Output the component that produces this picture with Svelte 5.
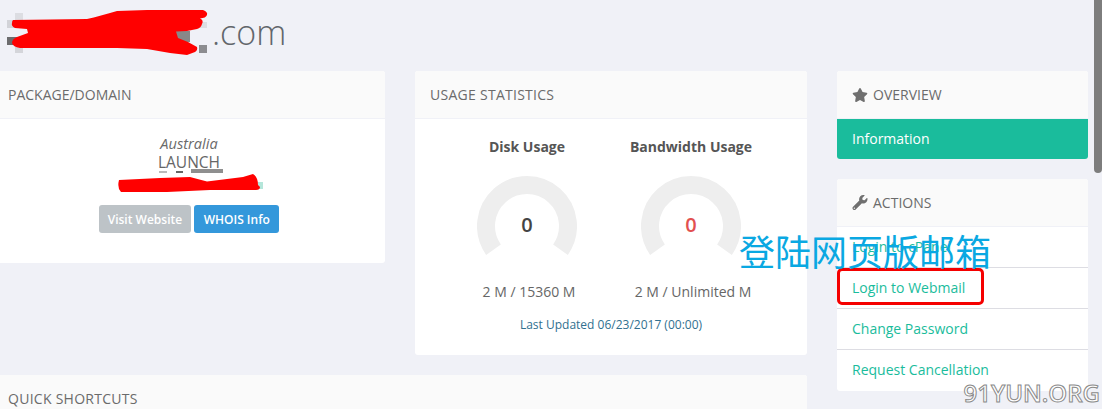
<script>
  const gauges = [
    { title: 'Disk Usage', value: '0', cls: '', label: '2 M / 15360 M' },
    { title: 'Bandwidth Usage', value: '0', cls: 'red', label: '2 M / Unlimited M' }
  ];
  const actions = ['Login to cPanel', 'Login to Webmail', 'Change Password', 'Request Cancellation'];
</script>

<div class="page">
  <h1 class="title"><span class="dot">.com</span></h1>
  <div class="columns">
    <div class="main">
      <div class="top">
        <section class="card pkg">
          <h2 class="head">PACKAGE/DOMAIN</h2>
          <div class="pkg-body">
            <em>Australia</em>
            <div class="plan">LAUNCH</div>
            <div class="domain"></div>
            <div class="buttons">
              <span class="btn grey">Visit Website</span>
              <span class="btn blue">WHOIS Info</span>
            </div>
          </div>
        </section>
        <section class="card usage">
          <h2 class="head wide">USAGE STATISTICS</h2>
          <div class="stats">
            {#each gauges as g}
              <div class="stat">
                <h3>{g.title}</h3>
                <div class="gauge">
                  <svg viewBox="0 0 100 90" width="100" height="90">
                    <path d="M16.5 73.7 A41 41 0 1 1 83.5 73.7" fill="none" stroke="#eeeeee" stroke-width="18" />
                  </svg>
                  <span class="val {g.cls}">{g.value}</span>
                </div>
                <p>{g.label}</p>
              </div>
            {/each}
          </div>
          <div class="updated">Last Updated 06/23/2017 (00:00)</div>
        </section>
      </div>
      <section class="card quick">
        <h2 class="head wide">QUICK SHORTCUTS</h2>
      </section>
    </div>
    <aside class="side">
      <section class="card">
        <h2 class="head">
          <svg class="ico" viewBox="0 0 576 512" width="16" height="14"><path fill="#6f6f6f" d="M259.3 17.8L194 150.2 47.9 171.5c-26.2 3.8-36.7 36.1-17.7 54.6l105.7 103-25 145.5c-4.5 26.3 23.2 46 46.4 33.7L288 439.6l130.7 68.7c23.2 12.2 50.9-7.4 46.4-33.7l-25-145.5 105.7-103c19-18.5 8.5-50.8-17.7-54.6L382 150.2 316.7 17.8c-11.7-23.6-45.6-23.9-57.4 0z"/></svg>
          OVERVIEW
        </h2>
        <div class="info">Information</div>
      </section>
      <section class="card">
        <h2 class="head">
          <svg class="ico" viewBox="0 0 512 512" width="16" height="15"><path fill="#6f6f6f" d="M507.73 109.1c-2.24-9.03-13.54-12.09-20.12-5.51l-74.36 74.36-67.88-11.31-11.31-67.88 74.36-74.36c6.62-6.62 3.43-17.9-5.66-20.16-47.38-11.74-99.55.91-136.58 37.93-39.64 39.64-50.55 97.1-34.05 147.2L18.74 402.76c-24.99 24.99-24.99 65.51 0 90.5 24.99 24.99 65.51 24.99 90.5 0l213.21-213.21c50.12 16.71 107.47 5.68 147.37-34.22 37.07-37.07 49.7-89.32 37.91-136.73zM64 472c-13.25 0-24-10.75-24-24 0-13.26 10.75-24 24-24s24 10.74 24 24c0 13.25-10.75 24-24 24z"/></svg>
          ACTIONS
        </h2>
        <ul class="links">
          {#each actions as a, i}
            <li>{a}{#if i === 1}<span class="ring"></span>{/if}</li>
          {/each}
        </ul>
      </section>
    </aside>
  </div>

  <div class="scrollbar"></div>

  <svg class="scribble" width="400" height="200" viewBox="0 0 400 200">
    <rect x="15" y="13" width="8" height="8" fill="#dcdde2" />
    <rect x="7" y="20" width="8" height="8" fill="#d2d3d8" />
    <rect x="7" y="37" width="13" height="8" fill="#6c6c6e" />
    <rect x="15" y="45" width="8" height="8" fill="#d4d5da" />
    <rect x="200" y="22" width="7" height="6" fill="#dcdde2" />
    <rect x="175" y="31" width="15" height="11" fill="#888" />
    <rect x="199" y="45" width="8" height="8" fill="#8c8c90" />
    <rect x="258" y="182" width="5" height="7" fill="#b5e6da" />
    <rect x="159" y="171" width="8" height="2" fill="#bbbbbb" />
    <rect x="176" y="171" width="7" height="2" fill="#666666" />
    <rect x="191" y="169" width="32" height="4" fill="#8f8f8f" />
    <path d="M13 20 L87 19 Q100 16 117 11 L147 10 L203 10 Q208 12 207 15 Q206 18 200 18.5 Q204 20 202 24 Q201 28 197 29 L187 31 L176 31.5 L178 38 L188 42 L197 47 Q198 50 195 52 L187 55 L170 53 L147 49 L117 48 L20 48 Q13 47 12 43 Q12 39 17 37 L28 33 L27 29 L15 28 Q11 26 12 23 Q12 21 13 20 Z" fill="#ff0000" />
    <path d="M119 180 L160 178 L190 177 L207 181.5 L243 177 L253 174 Q258 177 258 185 L260 187 Q260 190 256 190 L210 190 L167 192 L121 192 Q117 188 119 180 Z" fill="#ff0000" />
  </svg>

  <div class="note">登陆网页版邮箱</div>
  <div class="mark">91YUN.ORG</div>
</div>

<style>
  :global(body) {
    margin: 0;
    background: #f0f1f7;
    font-family: "Open Sans", "Noto Sans", sans-serif;
    color: #555;
  }
  .page {
    position: relative;
    width: 1102px;
    height: 409px;
    overflow: hidden;
    background: #f0f1f7;
  }
  .title {
    margin: 0;
    height: 71px;
    padding: 9px 0 0 212px;
    box-sizing: border-box;
    font-size: 34px;
    line-height: 46px;
    font-weight: 300;
    color: #62666b;
  }
  .columns {
    display: flex;
    gap: 30px;
    margin-left: -7px;
  }
  .main {
    width: 814px;
    display: flex;
    flex-direction: column;
    gap: 20px;
  }
  .top {
    display: flex;
    gap: 30px;
    align-items: flex-start;
  }
  .side {
    width: 251px;
    display: flex;
    flex-direction: column;
    gap: 20px;
  }
  .card {
    background: #fff;
    border-radius: 3px;
    overflow: hidden;
  }
  .head {
    margin: 0;
    height: 48px;
    box-sizing: border-box;
    background: #fafafa;
    border-bottom: 1px solid #f0f1f7;
    padding: 0 15px;
    display: flex;
    align-items: center;
    gap: 5px;
    font-size: 14px;
    font-weight: 400;
    color: #6b6b6b;
  }
  .head.wide { letter-spacing: 0.27px; }
  .pkg, .usage { width: 392px; }
  .pkg-body {
    height: 144px;
    box-sizing: border-box;
    padding-top: 16px;
    display: flex;
    flex-direction: column;
    align-items: center;
    font-size: 14px;
    line-height: 17px;
    color: #666;
  }
  .pkg-body em { font-size: 14.6px; color: #6a6a6a; }
  .plan { font-size: 15.5px; line-height: 20px; }
  .domain { height: 15px; }
  .buttons { display: flex; gap: 3px; margin-top: 18px; }
  .btn {
    height: 28px;
    display: flex;
    align-items: center;
    border-radius: 3px;
    color: #fff;
    font-size: 12px;
    font-weight: 600;
  }
  .grey { background: #bdc3c7; padding: 0 9px; }
  .blue { background: #3498db; padding: 0 9.5px; }
  .stats {
    display: flex;
    justify-content: center;
    padding: 18px 4px 0 0;
  }
  .stat {
    width: 164px;
    display: flex;
    flex-direction: column;
    align-items: center;
  }
  .stat h3 {
    margin: 0;
    font-size: 14px;
    line-height: 19px;
    font-weight: 700;
    color: #555;
  }
  .gauge {
    position: relative;
    width: 100px;
    height: 90px;
    margin-top: 20px;
  }
  .gauge svg { display: block; }
  .val {
    position: absolute;
    left: 0;
    right: 0;
    top: 36px;
    text-align: center;
    font-size: 20px;
    line-height: 26px;
    font-weight: 600;
    color: #444;
  }
  .val.red { color: #e25050; }
  .stat p {
    margin: 16px 0 0;
    padding-left: 4px;
    font-size: 14px;
    line-height: 19px;
    color: #666;
  }
  .updated {
    margin-top: 15px;
    height: 39px;
    text-align: center;
    font-size: 12px;
    line-height: 17px;
    color: #31708f;
  }
  .quick { height: 60px; }
  .info {
    height: 40px;
    background: #1abc9c;
    color: #fff;
    font-size: 14px;
    line-height: 40px;
    padding-left: 15px;
  }
  .links {
    list-style: none;
    margin: 0;
    padding: 0;
  }
  .links li {
    position: relative;
    height: 41px;
    box-sizing: border-box;
    line-height: 40px;
    padding-left: 15px;
    font-size: 14px;
    color: #1abc9c;
    border-bottom: 1px solid #dddde3;
  }
  .links li:last-child { border-bottom: 0; }
  .ring {
    position: absolute;
    left: 0;
    top: 0;
    width: 147px;
    height: 37px;
    box-sizing: border-box;
    border: 3px solid #f50000;
    border-radius: 5px;
  }
  .scrollbar {
    position: absolute;
    right: 0;
    top: 0;
    width: 8px;
    height: 173px;
    background: #7d7d7d;
    border-radius: 0 0 4px 4px;
  }
  .scribble {
    position: absolute;
    left: 0;
    top: 0;
    pointer-events: none;
  }
  .note {
    position: absolute;
    left: 739px;
    top: 228px;
    font-family: "Noto Sans CJK SC", sans-serif;
    font-size: 36px;
    line-height: 44px;
    font-weight: 400;
    color: #0aa8e2;
    white-space: nowrap;
  }
  .mark {
    position: absolute;
    right: 2px;
    top: 378px;
    font-family: "Open Sans", sans-serif;
    font-size: 24px;
    line-height: 30px;
    font-weight: 600;
    color: #fff;
    -webkit-text-stroke: 1px #8a8a8a;
    white-space: nowrap;
  }
</style>
